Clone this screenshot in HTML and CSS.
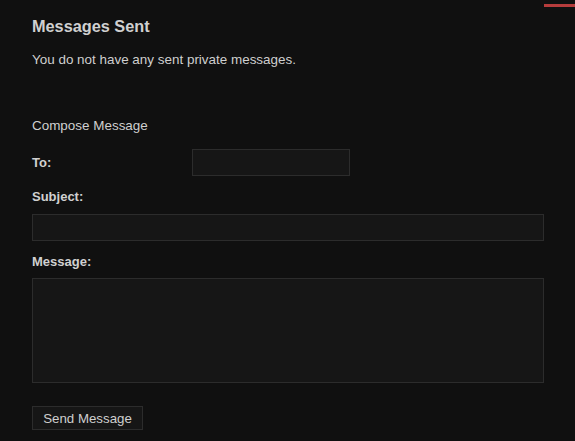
FILE: index.html
```html
<!DOCTYPE html>
<html>
<head>
<meta charset="utf-8">
<link rel="stylesheet" href="styles.css">
</head>
<body>
<div class="accent"></div>
<main class="page">
  <h2 class="title">Messages Sent</h2>
  <p class="note">You do not have any sent private messages.</p>
  <h3 class="compose">Compose Message</h3>
  <form class="form">
    <div class="row-to">
      <label class="label label-to">To:</label>
      <input class="field field-to" type="text">
    </div>
    <label class="label">Subject:</label>
    <input class="field field-wide" type="text">
    <label class="label">Message:</label>
    <textarea class="field field-area"></textarea>
    <button class="send" type="button">Send Message</button>
  </form>
</main>
</body>
</html>
```
FILE: styles.css
```css
html, body {
  margin: 0;
  padding: 0;
  background: #101010;
}
body {
  font-family: "Liberation Sans", Arial, sans-serif;
  color: #cfcfcf;
  font-size: 13px;
  position: relative;
  height: 441px;
  overflow: hidden;
}
.accent {
  position: absolute;
  top: 4px;
  right: 0;
  width: 31px;
  height: 3px;
  background: #b63c3c;
}
.page {
  padding: 16px 31px 0 32px;
  display: flex;
  flex-direction: column;
}
.title {
  margin: 0;
  font-size: 16.3px;
  line-height: 20px;
  font-weight: bold;
  color: #d0d0d0;
}
.note {
  margin: 15px 0 0;
  font-size: 13.45px;
  line-height: 17px;
}
.compose {
  margin: 49px 0 0;
  font-size: 13.45px;
  font-weight: normal;
  line-height: 17px;
}
.form {
  display: flex;
  flex-direction: column;
  margin-top: 15px;
}
.row-to {
  display: flex;
  align-items: center;
}
.label {
  font-weight: bold;
  line-height: 16px;
  color: #d0d0d0;
}
.label-to {
  width: 160px;
}
.field {
  box-sizing: border-box;
  background: #161616;
  border: 1px solid #2c2c2c;
  color: #ccc;
  font: inherit;
  margin: 0;
  padding: 0 4px;
  outline: none;
}
.field-to {
  width: 158px;
  height: 27px;
}
.row-to + .label {
  margin-top: 13px;
}
.field-wide {
  margin-top: 9px;
  width: 512px;
  height: 27px;
}
.field-wide + .label {
  margin-top: 13px;
}
.field-area {
  margin-top: 8px;
  width: 512px;
  height: 105px;
  resize: none;
  display: block;
}
.send {
  margin-top: 23px;
  align-self: flex-start;
  box-sizing: border-box;
  width: 111px;
  height: 24px;
  background: #161616;
  border: 1px solid #2c2c2c;
  color: #cfcfcf;
  font-family: "Liberation Sans", Arial, sans-serif;
  font-size: 13.3px;
  padding: 0;
}
```
